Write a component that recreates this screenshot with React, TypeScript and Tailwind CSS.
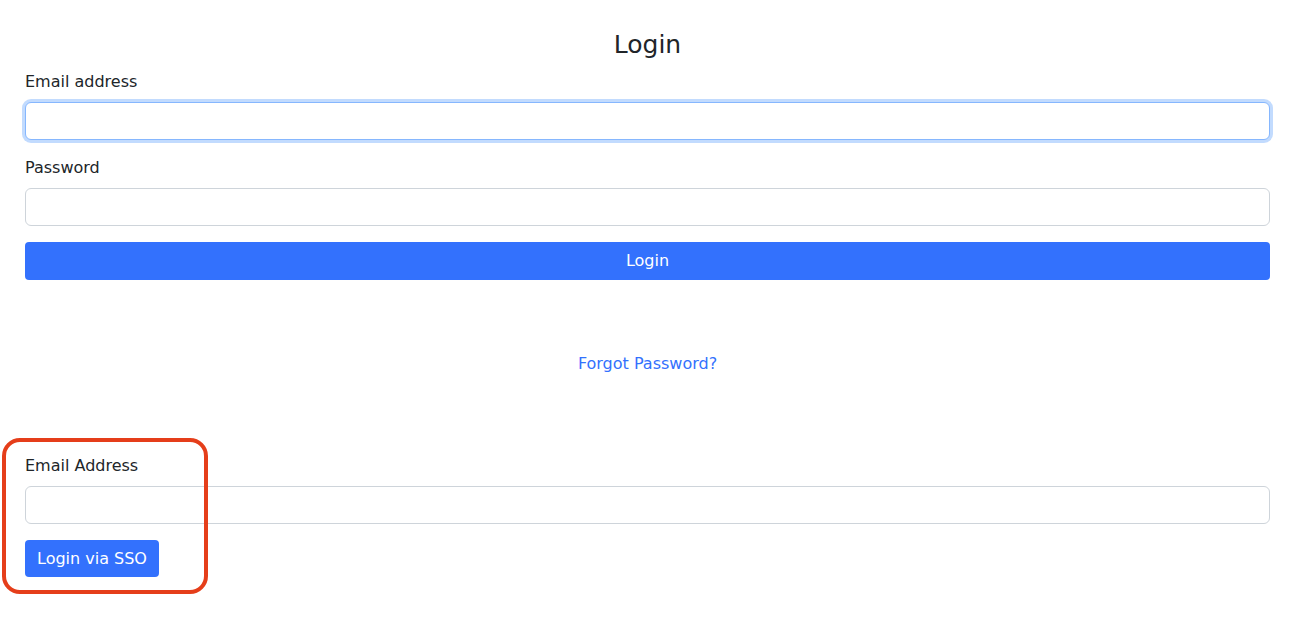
import React from "react";

function Field({ label, focused }: { label: string; focused?: boolean }) {
  return (
    <div>
      <label className="block text-[16px] leading-6 text-[#212529] mb-2">{label}</label>
      <input
        type="text"
        className={
          "block w-full h-[38px] rounded-[6px] border bg-white px-3 outline-none " +
          (focused
            ? "border-[#86b7fe] shadow-[0_0_0_3px_rgba(13,110,253,0.25)]"
            : "border-[#ced4da]")
        }
      />
    </div>
  );
}

export default function App() {
  return (
    <div
      className="relative min-h-[629px] bg-white pl-[25px] pr-[28px] pt-[30px] text-[#212529]"
      style={{ fontFamily: '"DejaVu Sans", "Liberation Sans", sans-serif' }}
    >
      <h2 className="text-center text-[25px] leading-[30px] mb-[10px]">Login</h2>

      <div className="flex flex-col gap-4">
        <Field label="Email address" focused />
        <Field label="Password" />
        <button className="h-[38px] w-full rounded-[4px] bg-[#3371fd] text-[16px] text-white">
          Login
        </button>
      </div>

      <div className="mt-[72px] text-center">
        <a href="#" className="text-[16px] leading-6 text-[#3371fd]">
          Forgot Password?
        </a>
      </div>

      <div className="mt-[78px] flex flex-col gap-4">
        <Field label="Email Address" />
        <div>
          <button className="h-[37px] rounded-[4px] bg-[#3371fd] px-3 text-[16px] text-white">
            Login via SSO
          </button>
        </div>
      </div>

      <div className="absolute left-[2px] top-[438px] h-[156px] w-[206px] rounded-[18px] border-4 border-[#e53e1a]" />
    </div>
  );
}
